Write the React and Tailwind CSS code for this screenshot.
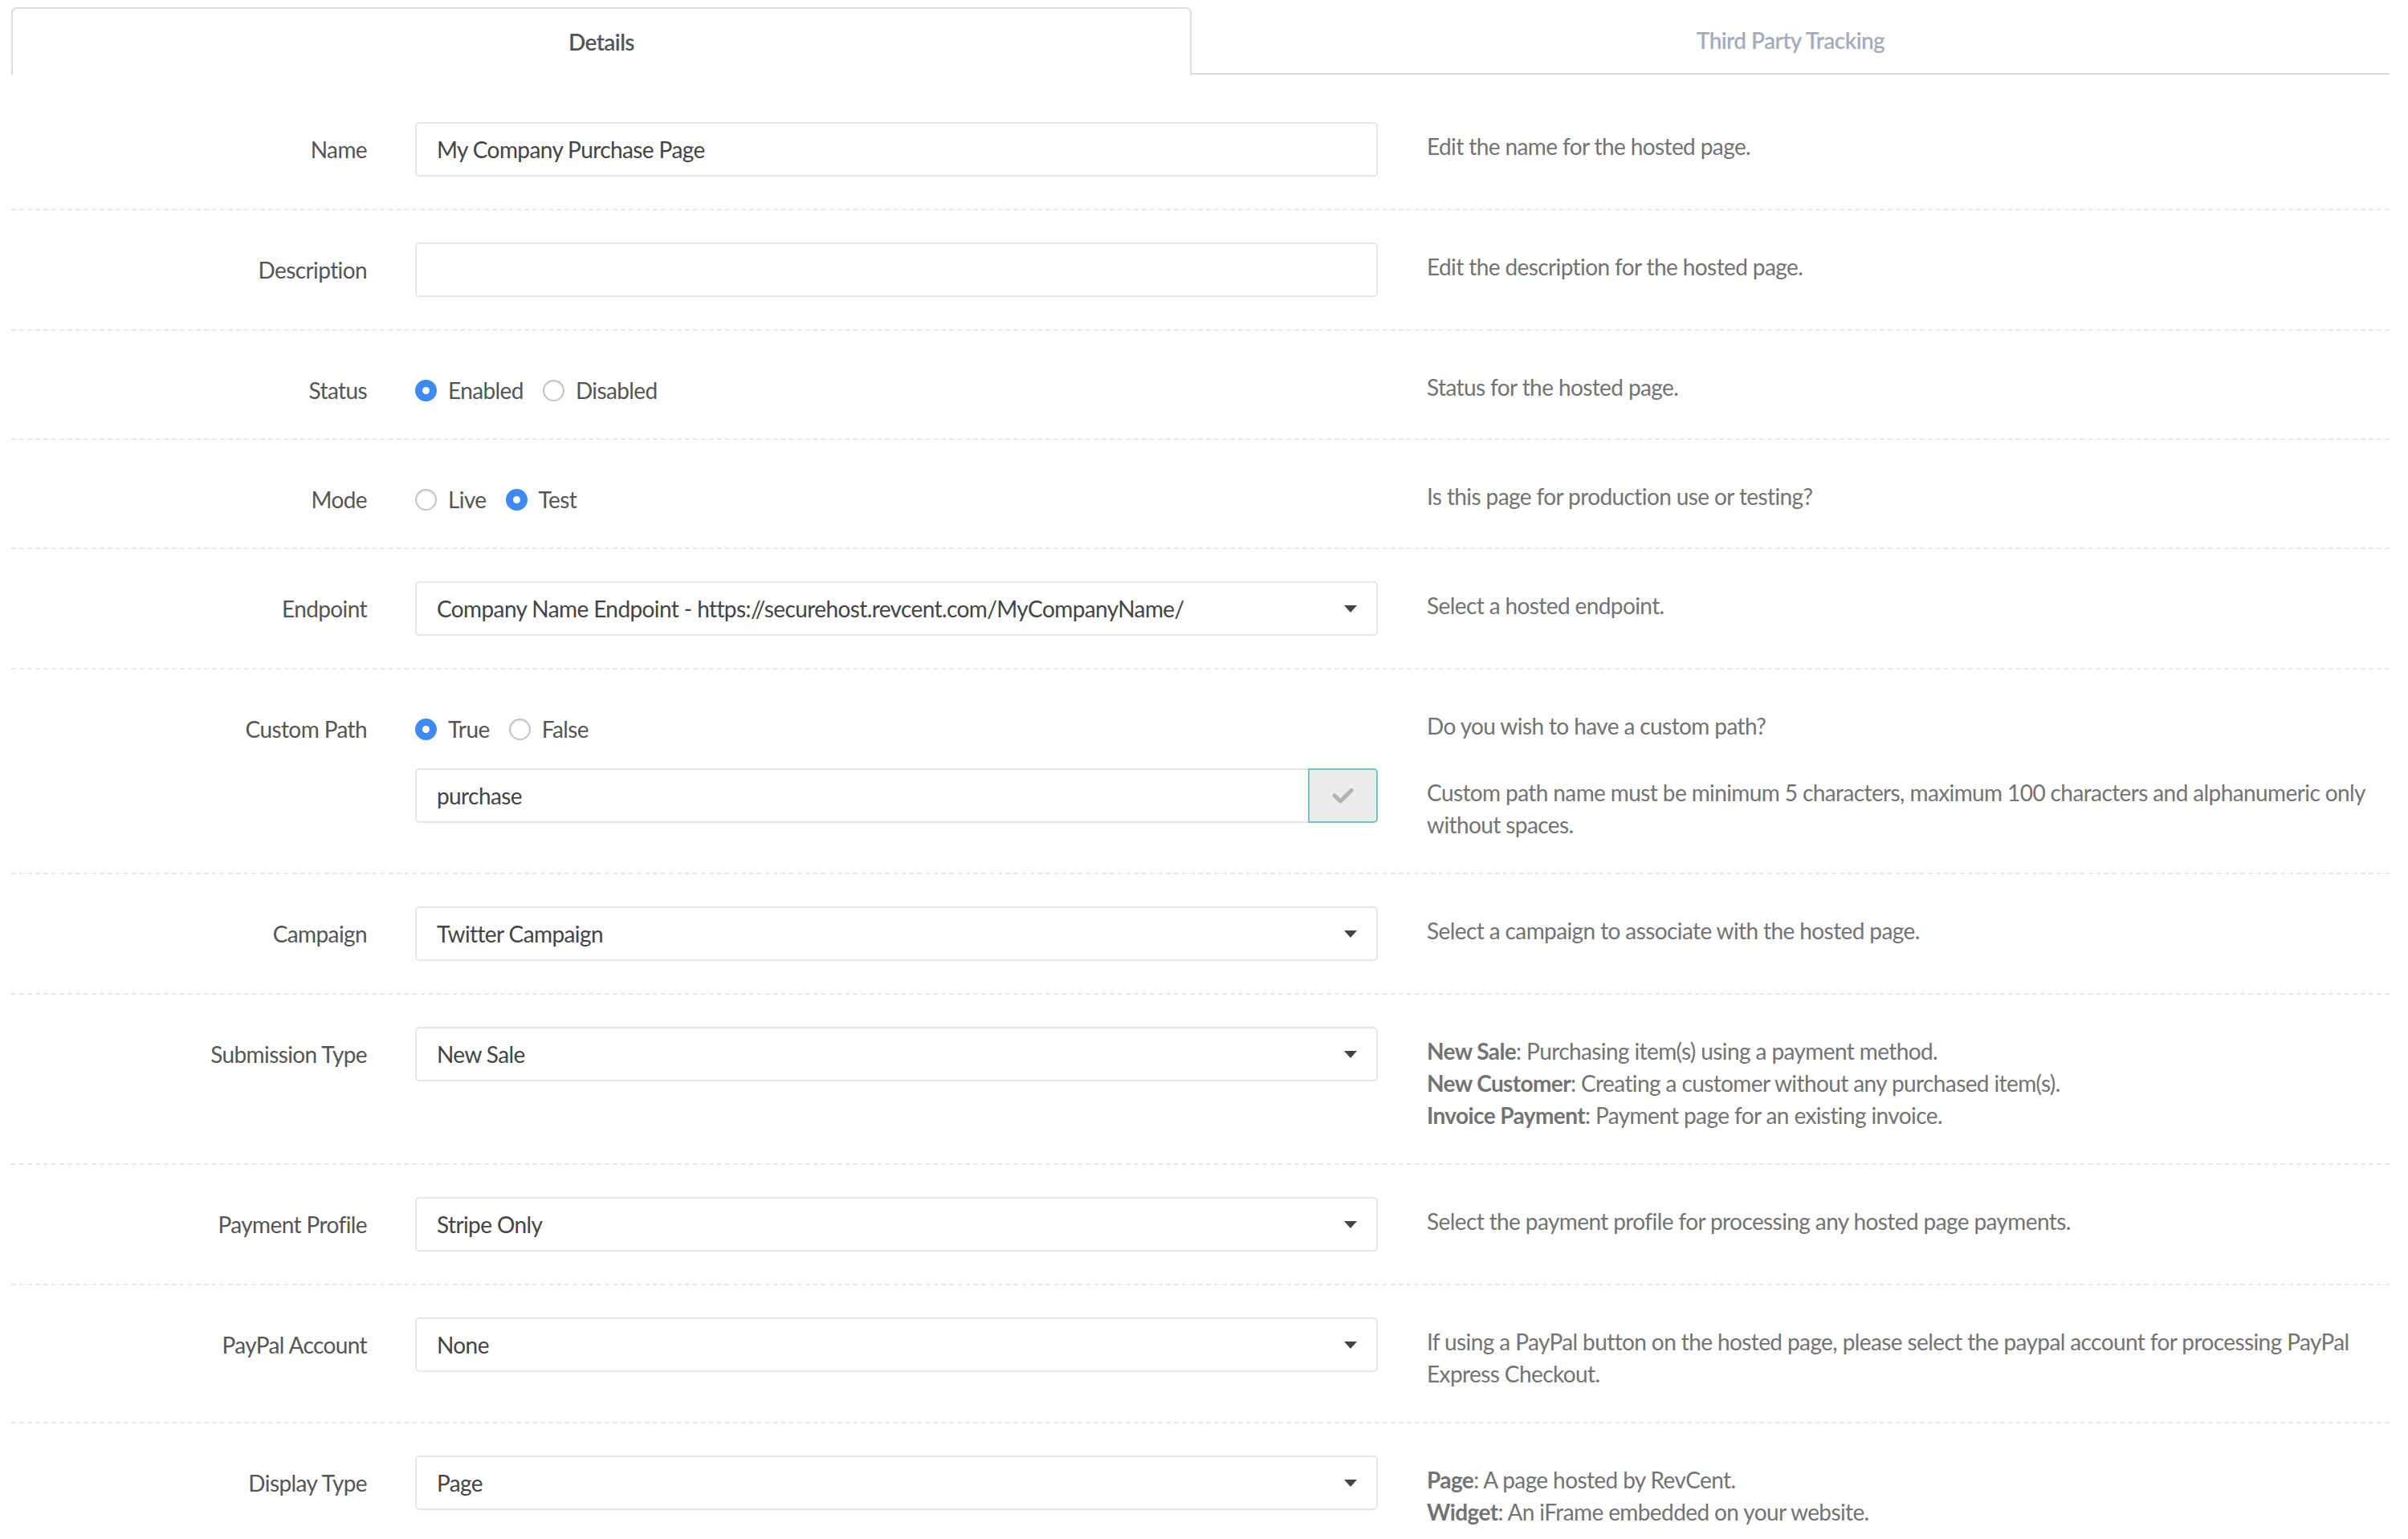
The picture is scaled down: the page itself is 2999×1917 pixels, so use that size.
import React from "react";

function Caret() {
  return (
    <svg width="16" height="9" viewBox="0 0 16 9" className="shrink-0">
      <path d="M0 0 L16 0 L8 9 Z" fill="#444" />
    </svg>
  );
}

function Radio({ checked, label }) {
  return (
    <label className="flex items-center">
      {checked ? (
        <span className="w-[27px] h-[27px] rounded-full bg-[#3d8bf2] flex items-center justify-center">
          <span className="w-[9px] h-[9px] rounded-full bg-white" />
        </span>
      ) : (
        <span className="w-[27px] h-[27px] rounded-full bg-white border-2 border-[#c4c4c4] shadow-[inset_0_1px_2px_rgba(0,0,0,0.12)]" />
      )}
      <span className="ml-[14px] text-[#555]">{label}</span>
    </label>
  );
}

function TextInput({ value }) {
  return (
    <div className="h-[68px] border-2 border-[#e4e6e8] rounded-[5px] flex items-center px-[25px] text-[#444] bg-white">
      {value}
    </div>
  );
}

function Select({ value }) {
  return (
    <div className="h-[68px] border-2 border-[#e4e7eb] rounded-[5px] flex items-center justify-between pl-[25px] pr-[24px] text-[#444] bg-white">
      <span>{value}</span>
      <Caret />
    </div>
  );
}

function Row({ label, children, help }) {
  return (
    <div className="flex py-[40px] border-b-2 border-dashed border-[#e6eaef]">
      <div className="w-[443px] shrink-0 text-right pt-[14px] text-[#555]">{label}</div>
      <div className="w-[1199px] shrink-0 ml-[60px]">{children}</div>
      <div className="flex-1 ml-[61px] pt-[10px] text-[#737373] whitespace-nowrap">{help}</div>
    </div>
  );
}

function RadioGroup({ items }) {
  return (
    <div className="flex items-center gap-[24px] pt-[14px] h-[54px]">
      {items.map((it) => (
        <Radio key={it.label} checked={it.checked} label={it.label} />
      ))}
    </div>
  );
}

export default function App() {
  return (
    <div className="min-h-screen bg-white pl-[14px] pr-[23px] pt-[9px] font-['Lato','Liberation_Sans',sans-serif] text-[28px] leading-[40px] tracking-[-0.6px] overflow-hidden">
      <div className="flex h-[84px]">
        <div className="w-[1470px] border-2 border-b-0 border-[#dddddd] rounded-t-[7px] flex items-center justify-center font-semibold text-[#555]">
          Details
        </div>
        <div className="flex-1 border-b-2 border-[#dddddd] flex items-center justify-center font-semibold text-[#a4acbc]">
          Third Party Tracking
        </div>
      </div>

      <div className="pt-[19px]">
        <Row label="Name" help="Edit the name for the hosted page.">
          <TextInput value="My Company Purchase Page" />
        </Row>
        <Row label="Description" help="Edit the description for the hosted page.">
          <TextInput value="" />
        </Row>
        <Row label="Status" help="Status for the hosted page.">
          <RadioGroup
            items={[
              { label: "Enabled", checked: true },
              { label: "Disabled", checked: false },
            ]}
          />
        </Row>
        <Row label="Mode" help="Is this page for production use or testing?">
          <RadioGroup
            items={[
              { label: "Live", checked: false },
              { label: "Test", checked: true },
            ]}
          />
        </Row>
        <Row label="Endpoint" help="Select a hosted endpoint.">
          <Select value="Company Name Endpoint - https://securehost.revcent.com/MyCompanyName/" />
        </Row>

        <div className="py-[40px] border-b-2 border-dashed border-[#e6eaef]">
          <div className="flex">
            <div className="w-[443px] shrink-0 text-right pt-[14px] text-[#555]">Custom Path</div>
            <div className="w-[1199px] shrink-0 ml-[60px]">
              <RadioGroup
                items={[
                  { label: "True", checked: true },
                  { label: "False", checked: false },
                ]}
              />
            </div>
            <div className="flex-1 ml-[61px] pt-[10px] text-[#737373]">Do you wish to have a custom path?</div>
          </div>
          <div className="flex mt-[29px]">
            <div className="w-[443px] shrink-0" />
            <div className="w-[1199px] shrink-0 ml-[60px] flex h-[68px]">
              <div className="flex-1 border-2 border-r-0 border-[#e4e6e8] rounded-l-[5px] flex items-center px-[25px] text-[#444]">
                purchase
              </div>
              <div className="w-[87px] border-2 border-[#6cc5d3] bg-[#ececec] rounded-r-[5px] flex items-center justify-center">
                <svg width="27" height="20" viewBox="0 0 27 20">
                  <path d="M3 10 L10.5 17 L24 3.5" stroke="#b3b3b3" strokeWidth="5" fill="none" strokeLinecap="round" strokeLinejoin="round" />
                </svg>
              </div>
            </div>
            <div className="flex-1 ml-[61px] pt-[10px] text-[#737373] whitespace-nowrap">
              Custom path name must be minimum 5 characters, maximum 100 characters and alphanumeric only
              <br />
              without spaces.
            </div>
          </div>
        </div>

        <Row label="Campaign" help="Select a campaign to associate with the hosted page.">
          <Select value="Twitter Campaign" />
        </Row>
        <Row
          label="Submission Type"
          help={
            <>
              <div>
                <span className="font-bold">New Sale</span>: Purchasing item(s) using a payment method.
              </div>
              <div>
                <span className="font-bold">New Customer</span>: Creating a customer without any purchased item(s).
              </div>
              <div>
                <span className="font-bold">Invoice Payment</span>: Payment page for an existing invoice.
              </div>
            </>
          }
        >
          <Select value="New Sale" />
        </Row>
        <Row label="Payment Profile" help="Select the payment profile for processing any hosted page payments.">
          <Select value="Stripe Only" />
        </Row>
        <Row
          label="PayPal Account"
          help={
            <>
              If using a PayPal button on the hosted page, please select the paypal account for processing PayPal
              <br />
              Express Checkout.
            </>
          }
        >
          <Select value="None" />
        </Row>
        <Row
          label="Display Type"
          help={
            <>
              <div>
                <span className="font-bold">Page</span>: A page hosted by RevCent.
              </div>
              <div>
                <span className="font-bold">Widget</span>: An iFrame embedded on your website.
              </div>
            </>
          }
        >
          <Select value="Page" />
        </Row>
      </div>
    </div>
  );
}
